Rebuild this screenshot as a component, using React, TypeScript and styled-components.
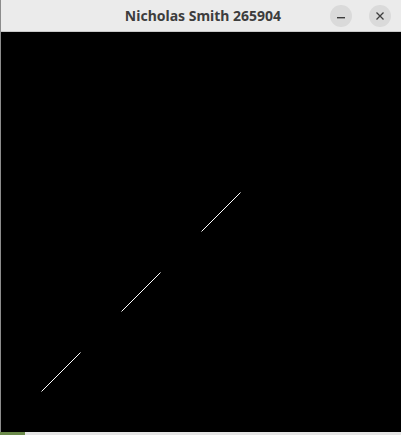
import React from "react";
import styled, { createGlobalStyle } from "styled-components";

const Global = createGlobalStyle`
  html, body { margin: 0; padding: 0; background: #e6e6e6; overflow: hidden; }
  #root { width: 401px; height: 435px; }
`;

const Window = styled.div`
  width: 401px;
  height: 432px;
  display: flex;
  flex-direction: column;
  box-sizing: border-box;
  border-left: 1px solid #8c8c8c;
  background: #ebebeb;
`;

const TitleBar = styled.div`
  height: 32px;
  flex: 0 0 32px;
  box-sizing: border-box;
  border-bottom: 1px solid #c9c9c9;
  background: #ebebeb;
  display: grid;
  grid-template-columns: 1fr auto 1fr;
  align-items: center;
`;

const Title = styled.div`
  grid-column: 2;
  font-family: "Noto Sans", "DejaVu Sans", sans-serif;
  font-weight: 700;
  font-size: 14px;
  color: #3d3d3d;
  padding-left: 4px;
`;

const Controls = styled.div`
  grid-column: 3;
  justify-self: end;
  display: flex;
  gap: 17px;
  padding-right: 10px;
`;

const CircleButton = styled.div`
  width: 22px;
  height: 22px;
  border-radius: 50%;
  background: #dadada;
  display: flex;
  align-items: center;
  justify-content: center;
`;

const Canvas = styled.svg`
  display: block;
  width: 400px;
  height: 400px;
  background: #000;
  flex: 0 0 400px;
`;

const Bottom = styled.div`
  height: 3px;
  display: flex;
  background: #e4e4e4;
`;

const Green = styled.div`
  width: 25px;
  background: #6b8a4a;
`;

const segments = [
  [41, 359, 80, 320],
  [121, 279, 160, 240],
  [201, 199, 240, 160],
];

export default function App() {
  return (
    <>
      <Global />
      <Window>
        <TitleBar>
          <Title>Nicholas Smith 265904</Title>
          <Controls>
            <CircleButton>
              <svg width="22" height="22" viewBox="0 0 22 22">
                <rect x="7" y="12" width="8" height="1.4" fill="#3d3d3d" />
              </svg>
            </CircleButton>
            <CircleButton>
              <svg width="22" height="22" viewBox="0 0 22 22">
                <path d="M7.5 7.5 L14.5 14.5 M14.5 7.5 L7.5 14.5" stroke="#3d3d3d" strokeWidth="1.3" />
              </svg>
            </CircleButton>
          </Controls>
        </TitleBar>
        <Canvas viewBox="0 0 400 400">
          {segments.map(([x1, y1, x2, y2], i) => (
            <line key={i} x1={x1 - 1 + 0.5} y1={y1 + 0.5} x2={x2 - 1 + 0.5} y2={y2 + 0.5} stroke="#fff" strokeWidth="1" />
          ))}
        </Canvas>
      </Window>
      <Bottom>
        <Green />
      </Bottom>
    </>
  );
}
